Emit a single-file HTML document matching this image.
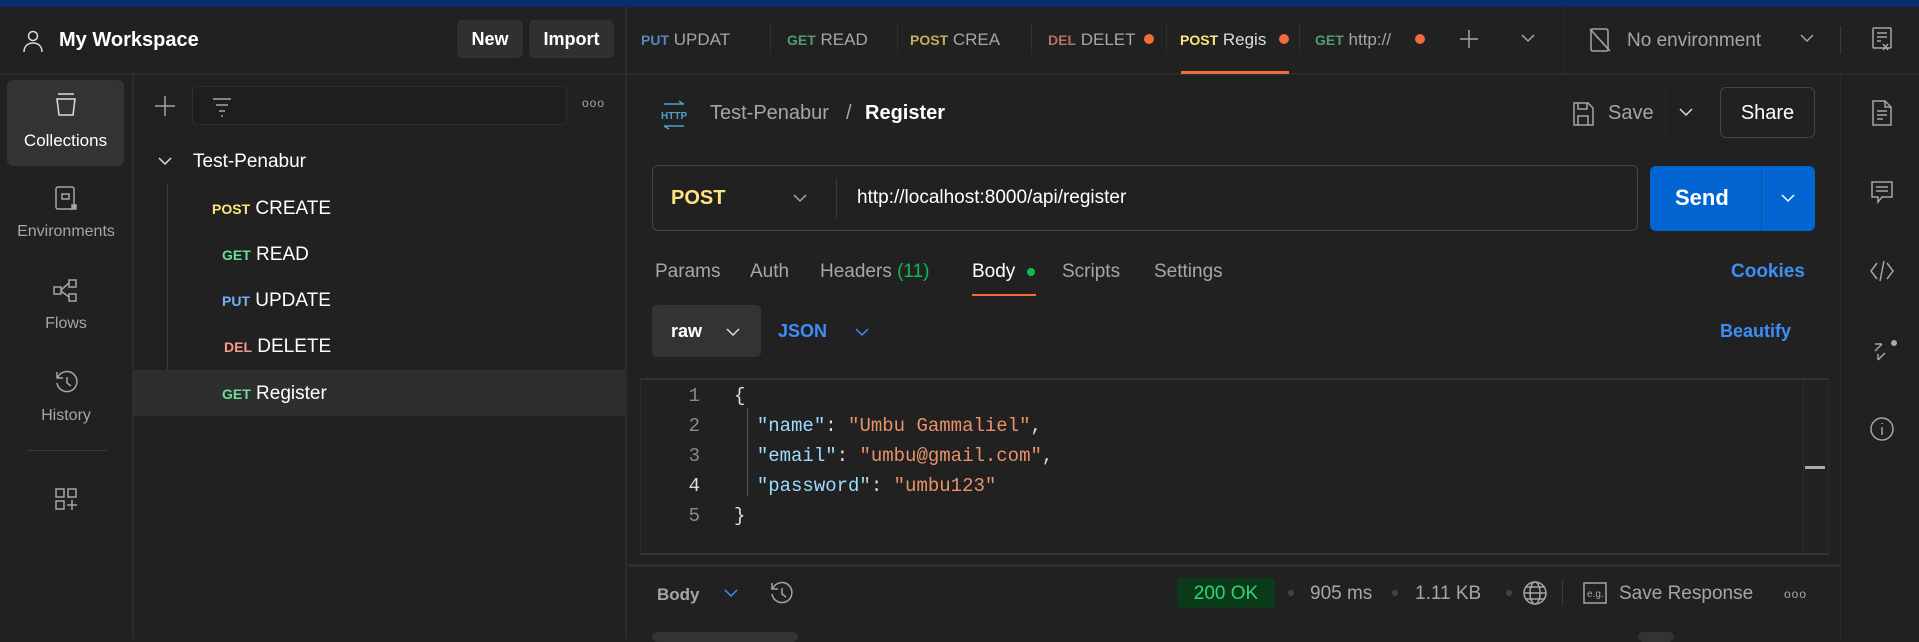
<!DOCTYPE html>
<html><head><meta charset="utf-8"><style>
*{box-sizing:border-box;margin:0;padding:0}
body{width:1919px;height:639px;background:#212121;font-family:"Liberation Sans",sans-serif;color:#fff;position:relative;overflow:hidden}
.a{position:absolute;white-space:nowrap}
.g{color:#a6a6a6}
.ln{position:absolute;background:#333}
svg{position:absolute;fill:none;stroke:#a6a6a6;stroke-width:1.5}
.m{font-size:14px;font-weight:700}
.code{font-family:"Liberation Mono",monospace;font-size:19px}
</style></head><body>
<div class="a" style="left:0;top:0;width:1919px;height:7px;background:#062e6f"></div>
<!-- header -->
<div class="ln" style="left:0;top:73px;width:1919px;height:2px;background:#2b2b2b"></div>
<div class="ln" style="left:625px;top:7px;width:2px;height:632px;background:#2b2b2b"></div>
<svg style="left:20px;top:28px" width="26" height="26" viewBox="0 0 26 26"><circle cx="13" cy="8" r="4.5" stroke="#ddd"/><path d="M4 24c0-6 4-9 9-9s9 3 9 9" stroke="#ddd"/></svg>
<div class="a" style="left:59px;top:29px;font-size:20px;font-weight:700">My Workspace</div>
<div class="a" style="left:457px;top:20px;width:66px;height:38px;background:#303030;border-radius:5px;font-size:18px;font-weight:700;text-align:center;line-height:39px">New</div>
<div class="a" style="left:529px;top:20px;width:85px;height:38px;background:#303030;border-radius:5px;font-size:18px;font-weight:700;text-align:center;line-height:39px">Import</div>
<!-- tabs -->
<div class="a" style="left:641px;top:30px;font-size:17px"><span class="m" style="color:#5a86bd">PUT</span> <span class="g">UPDAT</span></div>
<div class="a" style="left:787px;top:30px;font-size:17px"><span class="m" style="color:#4e9c73">GET</span> <span class="g">READ</span></div>
<div class="a" style="left:910px;top:30px;font-size:17px;width:100px;overflow:hidden"><span class="m" style="color:#c4ad5c">POST</span> <span class="g">CREA</span></div>
<div class="a" style="left:1048px;top:30px;font-size:17px"><span class="m" style="color:#b77068">DEL</span> <span class="g">DELET</span></div>
<div class="a" style="left:1180px;top:30px;font-size:17px"><span class="m" style="color:#ffe47e">POST</span> <span style="color:#ddd">Regis</span></div>
<div class="a" style="left:1315px;top:30px;font-size:17px"><span class="m" style="color:#4e9c73">GET</span> <span class="g">http://</span></div>
<div class="a" style="left:1144px;top:34px;width:10px;height:10px;border-radius:50%;background:#f26b3a"></div>
<div class="a" style="left:1279px;top:34px;width:10px;height:10px;border-radius:50%;background:#f26b3a"></div>
<div class="a" style="left:1415px;top:34px;width:10px;height:10px;border-radius:50%;background:#f26b3a"></div>
<div class="ln" style="left:770px;top:24px;width:1px;height:30px;background:#2f2f2f"></div>
<div class="ln" style="left:897px;top:24px;width:1px;height:30px;background:#2f2f2f"></div>
<div class="ln" style="left:1031px;top:24px;width:1px;height:30px;background:#2f2f2f"></div>
<div class="ln" style="left:1166px;top:24px;width:1px;height:30px;background:#2f2f2f"></div>
<div class="ln" style="left:1299px;top:24px;width:1px;height:30px;background:#2f2f2f"></div>
<div class="ln" style="left:1181px;top:71px;width:108px;height:3px;background:#f26b3a"></div>
<svg style="left:1458px;top:28px" width="22" height="22"><path d="M11 2v18M2 11h18"/></svg>
<svg style="left:1520px;top:32px" width="16" height="12"><path d="M2 3l6 6 6-6"/></svg>
<div class="ln" style="left:1563px;top:7px;width:1px;height:66px;background:#2b2b2b"></div>
<svg style="left:1588px;top:27px" width="24" height="26"><rect x="3" y="2" width="17" height="22" rx="2"/><path d="M2 2l20 22M8 9l8 8"/></svg>
<div class="a g" style="left:1627px;top:30px;font-size:19px">No environment</div>
<svg style="left:1799px;top:32px" width="16" height="12"><path d="M2 3l6 6 6-6"/></svg>
<div class="ln" style="left:1840px;top:26px;width:1px;height:28px;background:#3a3a3a"></div>
<svg style="left:1870px;top:26px" width="24" height="26"><rect x="3" y="2" width="18" height="20" rx="1"/><path d="M7 7h10M7 11h10M7 15h4M13 18l5 6M18 18l-5 6"/></svg>
<!-- left icon column -->
<div class="ln" style="left:132px;top:75px;width:2px;height:564px;background:#2b2b2b"></div>
<div class="a" style="left:7px;top:80px;width:117px;height:86px;background:#333;border-radius:6px"></div>
<svg style="left:53px;top:91px" width="26" height="28"><path d="M5 3h16M4 8h18l-2 16H6z" stroke="#ddd"/></svg>
<div class="a" style="left:7px;top:131px;width:117px;text-align:center;font-size:17px">Collections</div>
<svg style="left:53px;top:184px" width="26" height="30"><rect x="3" y="3" width="18" height="22" rx="2"/><rect x="9" y="10" width="7" height="5"/><rect x="19" y="21" width="4" height="4" fill="#a6a6a6"/></svg>
<div class="a g" style="left:0;top:223px;width:132px;text-align:center;font-size:16px">Environments</div>
<svg style="left:51px;top:277px" width="30" height="28"><rect x="3" y="10" width="7" height="7"/><rect x="18" y="3" width="7" height="7"/><rect x="18" y="17" width="7" height="7"/><path d="M10 13l8-7M10 14l8 6"/></svg>
<div class="a g" style="left:0;top:315px;width:132px;text-align:center;font-size:16px">Flows</div>
<svg style="left:53px;top:369px" width="28" height="28"><path d="M5 8a10 10 0 1 1-1 6M4 3v6h6M14 8v6l4 3"/></svg>
<div class="a g" style="left:0;top:407px;width:132px;text-align:center;font-size:16px">History</div>
<div class="ln" style="left:27px;top:450px;width:80px;height:1px;background:#3a3a3a"></div>
<svg style="left:53px;top:486px" width="28" height="28"><rect x="3" y="3" width="8" height="8"/><rect x="15" y="3" width="8" height="8"/><rect x="3" y="15" width="8" height="8"/><path d="M19 14v10M14 19h10"/></svg>
<!-- collections panel -->
<svg style="left:154px;top:95px" width="22" height="22"><path d="M11 1v20M1 11h20"/></svg>
<div class="a" style="left:192px;top:86px;width:375px;height:39px;border:1px solid #2e2e2e;border-radius:4px;background:#1e1e1e"></div>
<svg style="left:211px;top:95px" width="22" height="22"><path d="M2 4h18M5 10h12M8 16h6M10 21h2"/></svg>
<div class="a g" style="left:582px;top:96px;font-size:12px;letter-spacing:1px">ooo</div>
<svg style="left:157px;top:155px" width="16" height="12"><path d="M2 3l6 6 6-6" stroke="#ddd"/></svg>
<div class="a" style="left:193px;top:151px;font-size:19px">Test-Penabur</div>
<div class="ln" style="left:167px;top:183px;width:1px;height:190px;background:#3a3a3a"></div>
<div class="a" style="left:132px;top:370px;width:493px;height:46px;background:#2e2e2e"></div>
<div class="a" style="left:212px;top:198px;font-size:19px"><span class="m" style="color:#ffe47e">POST</span> CREATE</div>
<div class="a" style="left:222px;top:244px;font-size:19px"><span class="m" style="color:#6bdd9a">GET</span> READ</div>
<div class="a" style="left:222px;top:290px;font-size:19px"><span class="m" style="color:#74aef6">PUT</span> UPDATE</div>
<div class="a" style="left:224px;top:336px;font-size:19px"><span class="m" style="color:#f79a8e">DEL</span> DELETE</div>
<div class="a" style="left:222px;top:383px;font-size:19px"><span class="m" style="color:#6bdd9a">GET</span> Register</div>
<!-- breadcrumb -->
<svg style="left:659px;top:100px;stroke:#4fa0c8" width="30" height="30"><path d="M5 4h20M20 1l4 3M5 26h20M10 29l-5-3"/><text x="2" y="19" font-size="10" fill="#4fa0c8" stroke="none" font-family="Liberation Sans" font-weight="700">HTTP</text></svg>
<div class="a g" style="left:710px;top:102px;font-size:20px">Test-Penabur</div>
<div class="a g" style="left:846px;top:102px;font-size:20px">/</div>
<div class="a" style="left:865px;top:102px;font-size:20px;font-weight:700">Register</div>
<svg style="left:1571px;top:100px" width="24" height="28"><path d="M3 3h14l5 5v17H3z M7 3v6h9V3M7 25v-9h10v9"/></svg>
<div class="a g" style="left:1608px;top:102px;font-size:20px">Save</div>
<div class="ln" style="left:1665px;top:87px;width:1px;height:51px;background:#2b2b2b"></div>
<svg style="left:1678px;top:106px" width="16" height="12"><path d="M2 3l6 6 6-6" stroke="#ddd"/></svg>
<div class="a" style="left:1720px;top:87px;width:95px;height:51px;border:1px solid #444;border-radius:6px;text-align:center;line-height:50px;font-size:20px">Share</div>
<!-- url bar -->
<div class="a" style="left:652px;top:165px;width:986px;height:66px;border:1px solid #444;border-radius:6px"></div>
<div class="a" style="left:671px;top:187px;font-size:20px;font-weight:700;color:#ffe47e">POST</div>
<svg style="left:792px;top:192px" width="16" height="12"><path d="M2 3l6 6 6-6"/></svg>
<div class="ln" style="left:836px;top:178px;width:1px;height:40px;background:#3a3a3a"></div>
<div class="a" style="left:857px;top:187px;font-size:19px">http://localhost:8000/api/register</div>
<div class="a" style="left:1650px;top:166px;width:165px;height:65px;background:#0265d2;border-radius:6px"></div>
<div class="ln" style="left:1761px;top:166px;width:1px;height:65px;background:#0552a8"></div>
<div class="a" style="left:1675px;top:185px;font-size:22px;font-weight:700">Send</div>
<svg style="left:1780px;top:192px;stroke:#fff" width="16" height="12"><path d="M2 3l6 6 6-6"/></svg>
<!-- request tabs -->
<div class="a g" style="left:655px;top:261px;font-size:19px">Params</div>
<div class="a g" style="left:750px;top:261px;font-size:19px">Auth</div>
<div class="a g" style="left:820px;top:261px;font-size:19px">Headers <span style="color:#0cbb52">(11)</span></div>
<div class="a" style="left:972px;top:261px;font-size:19px">Body</div>
<div class="a" style="left:1027px;top:268px;width:8px;height:8px;border-radius:50%;background:#0cbb52"></div>
<div class="ln" style="left:972px;top:294px;width:64px;height:2px;background:#f26b3a"></div>
<div class="a g" style="left:1062px;top:261px;font-size:19px">Scripts</div>
<div class="a g" style="left:1154px;top:261px;font-size:19px">Settings</div>
<div class="a" style="left:1731px;top:261px;font-size:19px;font-weight:700;color:#3d8ef7">Cookies</div>
<div class="a" style="left:652px;top:305px;width:109px;height:52px;background:#333;border-radius:5px"></div>
<div class="a" style="left:671px;top:321px;font-size:18px;font-weight:700">raw</div>
<svg style="left:725px;top:326px;stroke:#ddd" width="16" height="12"><path d="M2 3l6 6 6-6"/></svg>
<div class="a" style="left:778px;top:321px;font-size:18px;font-weight:700;color:#3d8ef7">JSON</div>
<svg style="left:854px;top:326px;stroke:#3d8ef7" width="16" height="12"><path d="M2 3l6 6 6-6"/></svg>
<div class="a" style="left:1720px;top:321px;font-size:18px;font-weight:700;color:#3d8ef7">Beautify</div>
<!-- editor -->
<div class="a" style="left:640px;top:378px;width:1189px;height:177px;border-top:2px solid #333;border-bottom:2px solid #333;border-left:1px solid #2c2c2c;border-right:1px solid #2c2c2c"></div>
<div class="ln" style="left:1803px;top:380px;width:1px;height:173px;background:#2e2e2e"></div>
<div class="ln" style="left:1805px;top:466px;width:20px;height:3px;background:#aaa"></div>
<div class="ln" style="left:747px;top:408px;width:1px;height:88px;background:#555"></div>
<div class="a code" style="left:680px;top:381px;color:#8a8a8a;text-align:right;width:20px;line-height:30px">1<br>2<br>3<br><span style="color:#ddd">4</span><br>5</div>
<div class="a code" style="left:734px;top:381px;line-height:30px;color:#ddd">{<br>&nbsp;&nbsp;<span style="color:#9cdcfe">"name"</span>: <span style="color:#e8926a">"Umbu Gammaliel"</span>,<br>&nbsp;&nbsp;<span style="color:#9cdcfe">"email"</span>: <span style="color:#e8926a">"umbu@gmail.com"</span>,<br>&nbsp;&nbsp;<span style="color:#9cdcfe">"password"</span>: <span style="color:#e8926a">"umbu123"</span><br>}</div>
<!-- response bar -->
<div class="ln" style="left:627px;top:564px;width:1213px;height:3px;background:#2c2c2c"></div>
<div class="a g" style="left:657px;top:585px;font-size:17px;font-weight:700">Body</div>
<svg style="left:723px;top:587px;stroke:#3d8ef7" width="16" height="12"><path d="M2 3l6 6 6-6"/></svg>
<svg style="left:768px;top:580px" width="28" height="28"><path d="M5 8a10 10 0 1 1-1 6M4 3v6h6M14 8v6l4 3"/></svg>
<div class="a" style="left:1177px;top:578px;width:98px;height:30px;background:#0b3a1b;border-radius:4px;color:#2ed573;font-size:19px;text-align:center;line-height:31px">200 OK</div>
<div class="a" style="left:1288px;top:590px;width:6px;height:6px;border-radius:50%;background:#444"></div>
<div class="a g" style="left:1310px;top:583px;font-size:19px">905 ms</div>
<div class="a" style="left:1392px;top:590px;width:6px;height:6px;border-radius:50%;background:#444"></div>
<div class="a g" style="left:1415px;top:583px;font-size:19px">1.11 KB</div>
<div class="a" style="left:1506px;top:590px;width:6px;height:6px;border-radius:50%;background:#444"></div>
<svg style="left:1521px;top:579px" width="28" height="28"><circle cx="14" cy="14" r="11"/><ellipse cx="14" cy="14" rx="5" ry="11"/><path d="M3 14h22M5 8h18M5 20h18"/></svg>
<div class="ln" style="left:1562px;top:580px;width:1px;height:26px;background:#3a3a3a"></div>
<svg style="left:1582px;top:581px" width="26" height="24"><rect x="2" y="2" width="22" height="20"/><text x="5" y="16" font-size="10" fill="#a6a6a6" stroke="none" font-family="Liberation Sans">e.g.</text></svg>
<div class="a g" style="left:1619px;top:583px;font-size:19px">Save Response</div>
<div class="a g" style="left:1784px;top:587px;font-size:12px;letter-spacing:1px">ooo</div>
<div class="a" style="left:652px;top:632px;width:146px;height:10px;background:#333;border-radius:5px"></div>
<div class="a" style="left:1638px;top:632px;width:36px;height:10px;background:#333;border-radius:5px"></div>
<!-- right bar -->
<div class="ln" style="left:1840px;top:75px;width:1px;height:564px;background:#2b2b2b"></div>
<svg style="left:1870px;top:98px" width="24" height="30"><path d="M3 3h12l6 6v18H3z M15 3v6h6M7 13h10M7 17h10M7 21h6"/></svg>
<svg style="left:1869px;top:179px" width="26" height="26"><path d="M3 3h20v15H13l-4 5v-5H3z M7 8h12M7 12h12"/></svg>
<svg style="left:1868px;top:258px" width="28" height="26"><path d="M9 5l-6 8 6 8M19 5l6 8-6 8M16 3l-4 20"/></svg>
<svg style="left:1869px;top:338px" width="30" height="28"><path d="M6 13l7-7M6 6h7v0M16 15l-7 7M9 22v-6"/><circle cx="25" cy="5" r="3" fill="#aaa" stroke="none"/></svg>
<svg style="left:1868px;top:415px" width="28" height="28"><circle cx="14" cy="14" r="11"/><path d="M14 12v8M14 8v1"/></svg>
</body></html>
